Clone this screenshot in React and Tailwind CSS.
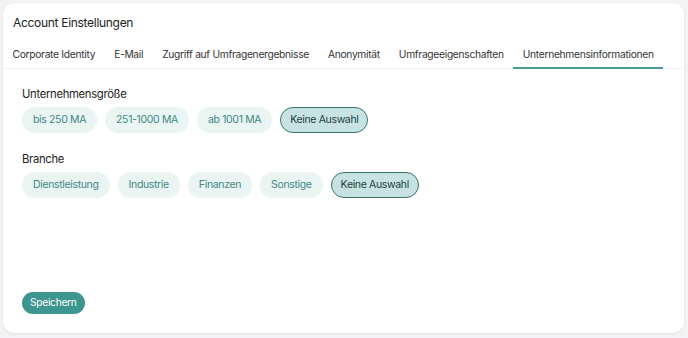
import React, { useState } from 'react';

const tabs = [
  'Corporate Identity',
  'E-Mail',
  'Zugriff auf Umfragenergebnisse',
  'Anonymität',
  'Umfrageeigenschaften',
  'Unternehmensinformationen',
];

const groups = [
  { label: 'Unternehmensgröße', options: ['bis 250 MA', '251-1000 MA', 'ab 1001 MA', 'Keine Auswahl'] },
  { label: 'Branche', options: ['Dienstleistung', 'Industrie', 'Finanzen', 'Sonstige', 'Keine Auswahl'] },
];

const Chip = ({ text, active }) => (
  <button
    className={
      active
        ? 'h-[26px] px-[9px] rounded-full border border-[#3b716d] bg-[#c6e3e1] text-[10.5px] tracking-[-0.35px] text-[#1f3f3c] whitespace-nowrap'
        : 'h-[26px] px-[10px] rounded-full border border-transparent bg-[#e9f4f3] text-[10.5px] tracking-[-0.35px] text-[#3f8984] whitespace-nowrap'
    }
  >
    {text}
  </button>
);

const App = () => {
  const [activeTab] = useState(5);

  return (
    <div className="w-[688px] h-[338px] bg-[#f3f3f5] pt-[3px] pl-[3px] pr-[4px] pb-[5px] font-['Inter',sans-serif]">
      <div className="h-full bg-white rounded-xl shadow-[0_1px_3px_rgba(0,0,0,0.08)] flex flex-col">
        <h1 className="px-[10px] pt-[12px] text-[12px] leading-[16px] tracking-[-0.3px] text-[#222]">
          Account Einstellungen
        </h1>

        <div className="mt-[16px] flex border-b border-[#f1f1f1]">
          {tabs.map((t, i) => (
            <div
              key={t}
              className={
                i === activeTab
                  ? 'px-[9.5px] pb-[5px] text-[10.25px] leading-[14px] tracking-[-0.3px] text-[#333] border-b-2 border-[#4a9c97] -mb-px whitespace-nowrap'
                  : 'px-[9.5px] pb-[7px] text-[10.25px] leading-[14px] tracking-[-0.3px] text-[#333] whitespace-nowrap'
              }
            >
              {t}
            </div>
          ))}
        </div>

        <div className="px-[19px] pt-[18px] flex flex-col gap-[19px]">
          {groups.map(g => (
            <div key={g.label}>
              <p className="text-[11.25px] leading-[14px] tracking-[-0.3px] text-[#222] mb-[6px]">{g.label}</p>
              <div className="flex gap-[8px]">
                {g.options.map((o, i) => (
                  <Chip key={o} text={o} active={i === g.options.length - 1} />
                ))}
              </div>
            </div>
          ))}
        </div>

        <div className="mt-auto px-[19px] pb-[19px]">
          <button className="h-[22px] px-[8px] rounded-full bg-[#3d9590] text-white text-[10.25px] tracking-[-0.3px]">
            Speichern
          </button>
        </div>
      </div>
    </div>
  );
};

export default App;
